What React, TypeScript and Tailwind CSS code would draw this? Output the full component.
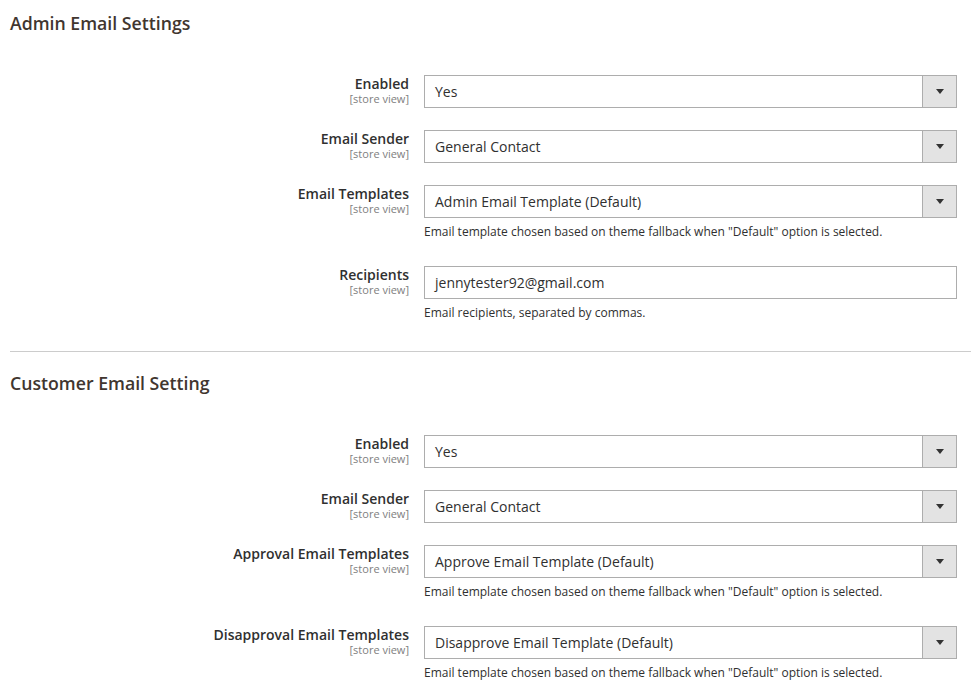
import React from 'react';

type Field = {
  label: string;
  value: string;
  kind: 'select' | 'text';
  note?: string;
};

const fallbackNote = 'Email template chosen based on theme fallback when "Default" option is selected.';

const sections: { title: string; fields: Field[] }[] = [
  {
    title: 'Admin Email Settings',
    fields: [
      { label: 'Enabled', value: 'Yes', kind: 'select' },
      { label: 'Email Sender', value: 'General Contact', kind: 'select' },
      { label: 'Email Templates', value: 'Admin Email Template (Default)', kind: 'select', note: fallbackNote },
      { label: 'Recipients', value: 'jennytester92@gmail.com', kind: 'text', note: 'Email recipients, separated by commas.' },
    ],
  },
  {
    title: 'Customer Email Setting',
    fields: [
      { label: 'Enabled', value: 'Yes', kind: 'select' },
      { label: 'Email Sender', value: 'General Contact', kind: 'select' },
      { label: 'Approval Email Templates', value: 'Approve Email Template (Default)', kind: 'select', note: fallbackNote },
      { label: 'Disapproval Email Templates', value: 'Disapprove Email Template (Default)', kind: 'select', note: fallbackNote },
    ],
  },
];

function FieldRow({ field }: { field: Field }) {
  return (
    <div className="flex gap-[15px] mb-[22px]">
      <div className="w-[399px] flex flex-col items-end text-right">
        <span className="text-[14px] leading-[17px] font-semibold text-[#303030]">{field.label}</span>
        <span className="text-[11px] leading-[14px] text-[#808080]">[store view]</span>
      </div>
      <div className="w-[533px]">
        <div className="h-[33px] border border-[#adadad] bg-white flex items-stretch">
          <div className="flex-1 flex items-center pl-[10px] text-[14px] text-[#303030]">{field.value}</div>
          {field.kind === 'select' && (
            <div className="w-[34px] border-l border-[#adadad] bg-[#e3e3e3] flex items-center justify-center">
              <svg width="8" height="5" viewBox="0 0 8 5">
                <path d="M0 0 H8 L4 5 Z" fill="#333333" />
              </svg>
            </div>
          )}
        </div>
        {field.note && (
          <div className="mt-[5px] mb-[3px] text-[12px] leading-[18px] text-[#303030]">{field.note}</div>
        )}
      </div>
    </div>
  );
}

export default function App() {
  return (
    <div className="w-[971px] h-[695px] overflow-hidden bg-white pl-[10px] font-['Open_Sans',sans-serif]">
      {sections.map((s, i) => (
        <div key={s.title} className="flex flex-col">
          {i > 0 && <div className="h-px bg-[#cccccc] mt-[4px]" />}
          <h2 className={`${i > 0 ? 'pt-[20px]' : 'pt-[12px]'} text-[17.7px] leading-[22px] font-semibold text-[#41362f] mb-[41px]`}>
            {s.title}
          </h2>
          <div className="flex flex-col">
            {s.fields.map(f => (
              <FieldRow key={f.label} field={f} />
            ))}
          </div>
        </div>
      ))}
    </div>
  );
}
